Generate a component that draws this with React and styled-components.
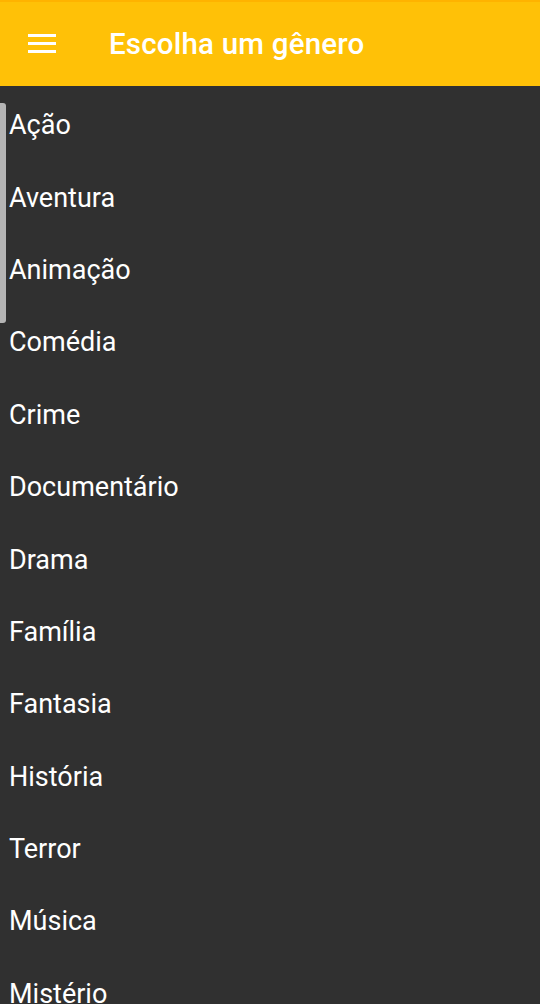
import React from "react";
import styled, { createGlobalStyle } from "styled-components";

const Global = createGlobalStyle`
  html, body { margin: 0; padding: 0; background: #303030; }
  body { font-family: Roboto, "Noto Sans", "Liberation Sans", sans-serif; }
  * { box-sizing: border-box; }
`;

const Screen = styled.div`
  width: 540px;
  height: 1004px;
  overflow: hidden;
  background: #303030;
  display: flex;
  flex-direction: column;
  position: relative;
`;

const TopBar = styled.header`
  height: 86px;
  flex: 0 0 86px;
  background: #ffc107;
  border-top: 2px solid #ffb300;
  display: flex;
  align-items: center;
  padding-left: 28px;
  gap: 53px;
`;

const MenuIcon = styled.div`
  width: 28px;
  display: flex;
  flex-direction: column;
  gap: 5px;
  margin-top: -1px;
`;

const MenuLine = styled.span`
  display: block;
  height: 3px;
  background: #fff;
`;

const Title = styled.h1`
  margin: 0;
  color: #fff;
  font-size: 29.5px;
  font-weight: 500;
  letter-spacing: 0.2px;
`;

const List = styled.ul`
  list-style: none;
  margin: 0;
  padding: 3px 0 0 0;
`;

const Item = styled.li`
  height: 72.4px;
  display: flex;
  align-items: center;
  padding-left: 9px;
  color: #fff;
  font-size: 27px;
  font-weight: 400;
`;

const ScrollThumb = styled.div`
  position: absolute;
  left: 0;
  top: 103px;
  width: 6px;
  height: 220px;
  border-radius: 0 3px 3px 0;
  background: #b4b4b4;
`;

const genres = [
  "Ação",
  "Aventura",
  "Animação",
  "Comédia",
  "Crime",
  "Documentário",
  "Drama",
  "Família",
  "Fantasia",
  "História",
  "Terror",
  "Música",
  "Mistério",
];

export default function App() {
  return (
    <Screen>
      <Global />
      <TopBar>
        <MenuIcon>
          <MenuLine />
          <MenuLine />
          <MenuLine />
        </MenuIcon>
        <Title>Escolha um gênero</Title>
      </TopBar>
      <List>
        {genres.map((g) => (
          <Item key={g}>{g}</Item>
        ))}
      </List>
      <ScrollThumb />
    </Screen>
  );
}
